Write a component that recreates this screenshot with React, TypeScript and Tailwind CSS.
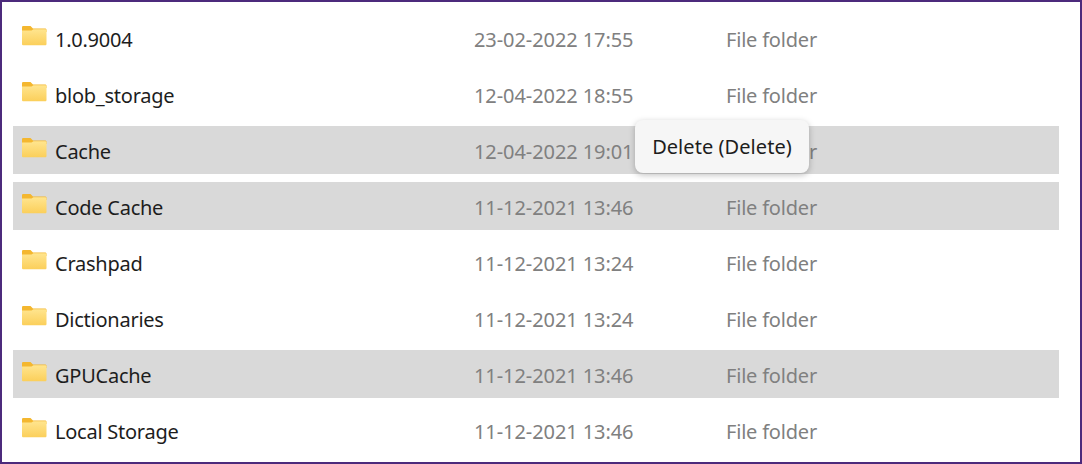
import React from "react";

/** Rows of the Explorer listing */
const ROWS = [
  { name: "1.0.9004", date: "23-02-2022 17:55", selected: false },
  { name: "blob_storage", date: "12-04-2022 18:55", selected: false },
  { name: "Cache", date: "12-04-2022 19:01", selected: true },
  { name: "Code Cache", date: "11-12-2021 13:46", selected: true },
  { name: "Crashpad", date: "11-12-2021 13:24", selected: false },
  { name: "Dictionaries", date: "11-12-2021 13:24", selected: false },
  { name: "GPUCache", date: "11-12-2021 13:46", selected: true },
  { name: "Local Storage", date: "11-12-2021 13:46", selected: false },
];

function FolderIcon() {
  return (
    <svg width="26" height="21" viewBox="0 0 26 21" className="shrink-0">
      <defs>
        <linearGradient id="folderFill" x1="0" y1="0" x2="0" y2="1">
          <stop offset="0" stopColor="#ffe58f" />
          <stop offset="1" stopColor="#fbcf5a" />
        </linearGradient>
      </defs>
      <path d="M1 2.5C1 1.4 1.6 1 2.5 1H9.5L12 3.5H24C25 3.5 25.5 4 25.5 5V7H1Z" fill="#f4b72f" />
      <path d="M1 5.5H10.5L12.5 4.2H24C25 4.2 25.5 4.8 25.5 5.5V19C25.5 19.8 25 20.3 24 20.3H2.5C1.6 20.3 1 19.8 1 19Z" fill="url(#folderFill)" />
    </svg>
  );
}

export default function App() {
  return (
    <div className="relative h-[464px] w-[1082px] overflow-hidden border-[2px] border-[#4c2a7c] bg-white font-['Noto_Sans','Open_Sans',sans-serif]">
      {/* File list */}
      <div className="flex flex-col gap-2 pl-[11px] pr-[21px] pt-3">
        {ROWS.map((row) => (
          <div
            key={row.name}
            className={`flex h-12 items-center text-[20px] ${row.selected ? "bg-[#d9d9d9]" : ""}`}
          >
            <div className="ml-2 mb-1.5 flex w-[26px]">
              <FolderIcon />
            </div>
            <span className="ml-2 w-[419px] pt-1 tracking-[-0.25px] text-[#1d1d1d]">{row.name}</span>
            <span className="w-[252px] pt-1 tracking-[-0.08px] text-[#808080]">{row.date}</span>
            <span className="pt-1 tracking-[-0.2px] text-[#808080]">File folder</span>
          </div>
        ))}
      </div>

      {/* Delete tooltip */}
      <div className="absolute left-[633px] top-[118px] flex h-[53px] w-[174px] items-center justify-center rounded-lg bg-[#f6f6f6] text-[20px] tracking-[0.06px] text-[#1d1d1d] shadow-[0_2px_6px_rgba(0,0,0,0.25)]">
        Delete (Delete)
      </div>
    </div>
  );
}
